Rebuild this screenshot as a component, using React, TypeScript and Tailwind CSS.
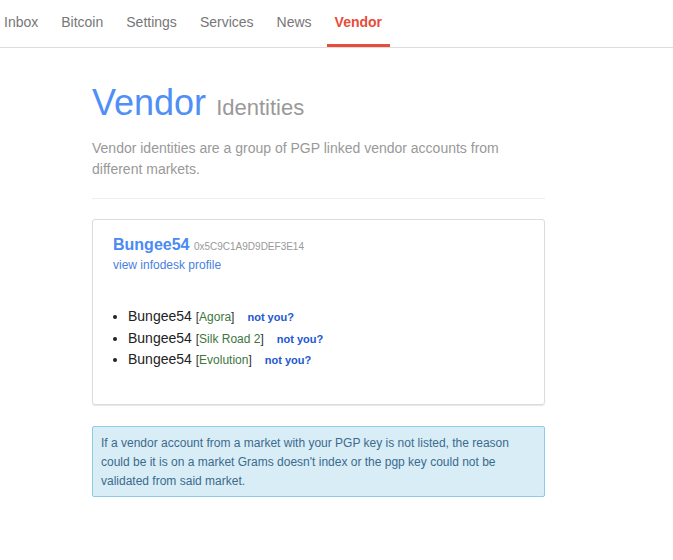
const NAV = ["Inbox", "Bitcoin", "Settings", "Services", "News", "Vendor"];

const ACCOUNTS = [
  { name: "Bungee54", market: "Agora" },
  { name: "Bungee54", market: "Silk Road 2" },
  { name: "Bungee54", market: "Evolution" },
];

export default function App() {
  return (
    <div className="min-h-[560px] bg-white font-['Liberation_Sans',Arial,sans-serif]">
      {/* top nav */}
      <ul className="flex gap-[7px] border-b border-[#ddd] -ml-[4px]">
        {NAV.map((item) => {
          const active = item === "Vendor";
          return (
            <li
              key={item}
              className={
                active
                  ? "px-2 pt-3 pb-3 border-b-[3px] border-[#e74c3c] text-[14px] leading-[20px] font-bold text-[#e74c3c]"
                  : "px-2 pt-3 pb-3 border-b-[3px] border-transparent text-[14px] leading-[20px] text-[#777]"
              }
            >
              {item}
            </li>
          );
        })}
      </ul>

      <div className="ml-[92px] w-[453px]">
        <h1 className="mt-[35px] text-[36px] leading-[40px] text-[#4f8ff7]">
          Vendor{" "}
          <span className="text-[22px] text-[#999]">Identities</span>
        </h1>
        <p className="mt-[10px] text-[14px] leading-[21px] text-[#999]">
          Vendor identities are a group of PGP linked vendor accounts from
          different markets.
        </p>
        <hr className="mt-[18px] border-[#eee]" />

        {/* identity card */}
        <div className="mt-[20px] rounded-[3px] border border-[#dcdcdc] px-[20px] pt-[15px] pb-[33px] shadow-[0_1px_1px_rgba(0,0,0,0.1)]">
          <div className="leading-[20px]">
            <span className="text-[16px] font-bold text-[#4a8af4]">Bungee54</span>{" "}
            <span className="text-[10px] text-[#999]">0x5C9C1A9D9DEF3E14</span>
          </div>
          <div className="text-[12px] leading-[16px] text-[#4a7fe0]">
            view infodesk profile
          </div>

          <ul className="mt-[33px] list-disc pl-[15px] text-[14px] text-[#222]">
            {ACCOUNTS.map((a) => (
              <li key={a.market} className="leading-[21.5px]">
                <span>{a.name}</span>{" "}
                <span className="text-[12px] leading-none text-[#333]">
                  [<span className="text-[#3c763d]">{a.market}</span>]
                </span>
                <span className="ml-[13px] text-[11px] leading-none font-bold text-[#2158d0]">
                  not you?
                </span>
              </li>
            ))}
          </ul>
        </div>

        {/* info alert */}
        <div className="mt-[21px] rounded-[2px] border border-[#8ecbe9] bg-[#d9edf7] px-[8px] pt-[7px] pb-[5px] text-[12px] leading-[19px] text-[#3a6b8c]">
          If a vendor account from a market with your PGP key is not listed, the
          reason could be it is on a market Grams doesn't index or the pgp key
          could not be validated from said market.
        </div>
      </div>
    </div>
  );
}
